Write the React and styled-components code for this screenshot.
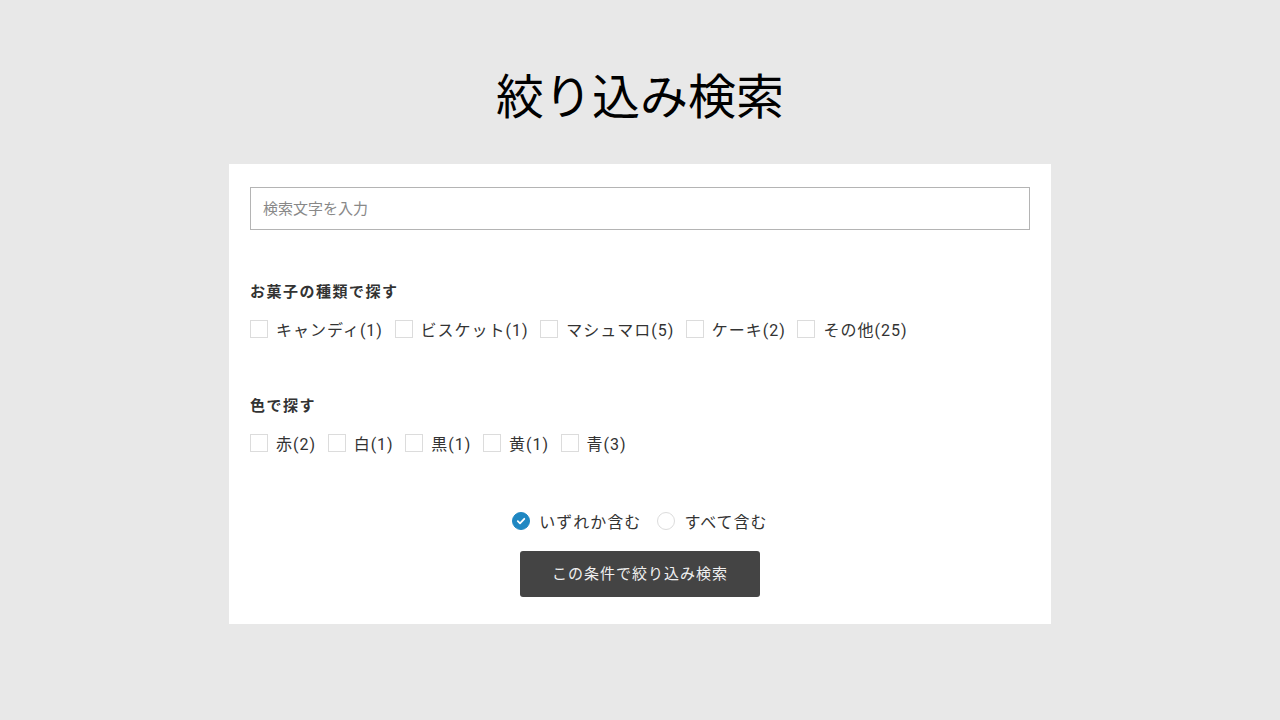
import React from 'react';
import styled, { createGlobalStyle } from 'styled-components';

const GlobalStyle = createGlobalStyle`
  html, body {
    margin: 0;
    padding: 0;
    background: #e8e8e8;
  }
  body {
    font-family: Roboto, "Noto Sans CJK JP", sans-serif;
    color: #333;
  }
  * { box-sizing: border-box; }
`;

const Page = styled.div`
  min-height: 720px;
  display: flex;
  flex-direction: column;
  align-items: center;
  padding-top: 64px;
`;

const Title = styled.h1`
  margin: 0 0 32px;
  font-size: 48px;
  line-height: 68px;
  font-weight: 400;
  color: #000;
  letter-spacing: 0;
`;

const Card = styled.form`
  width: 822px;
  background: #fff;
  padding: 23px 21px 27px;
`;

const SearchInput = styled.input`
  display: block;
  width: 100%;
  height: 43px;
  border: 1px solid #b4b4b4;
  padding: 0 12px;
  font-family: Roboto, "Noto Sans CJK JP", sans-serif;
  font-size: 15px;
  color: #333;
  outline: none;
  &::placeholder { color: #888; }
`;

const Section = styled.section`
  margin-top: ${p => p.$top}px;
`;

const Heading = styled.h2`
  margin: 0 0 15px;
  font-size: 15px;
  line-height: 22px;
  font-weight: 700;
  letter-spacing: 1.5px;
  color: #333;
`;

const Row = styled.div`
  display: flex;
  align-items: center;
  gap: 11.6px;
  height: 22px;
`;

const Option = styled.label`
  display: flex;
  align-items: center;
  gap: 8px;
  font-size: 16px;
  letter-spacing: 1px;
  color: #333;
  cursor: pointer;
`;

const Box = styled.input.attrs({ type: 'checkbox' })`
  appearance: none;
  margin: 0;
  width: 18px;
  height: 18px;
  border: 1px solid #dcdcdc;
  background: #fff;
`;

const RadioRow = styled.div`
  display: flex;
  justify-content: center;
  gap: 16px;
  height: 22px;
  margin-top: 56px;
  & > label { gap: 9px; }
`;

const RadioDot = styled.span`
  width: 18px;
  height: 18px;
  border-radius: 50%;
  display: flex;
  align-items: center;
  justify-content: center;
  background: ${p => (p.$on ? '#1f87c2' : '#fff')};
  border: 1px solid ${p => (p.$on ? '#1f87c2' : '#dcdcdc')};
`;

const Submit = styled.button`
  display: block;
  margin: 19px auto 0;
  width: 240px;
  height: 46px;
  padding: 0 0 3px;
  border: none;
  border-radius: 3px;
  background: #444;
  color: #f0f0f0;
  font-family: Roboto, "Noto Sans CJK JP", sans-serif;
  font-size: 15px;
  letter-spacing: 1px;
`;

const kinds = ['キャンディ(1)', 'ビスケット(1)', 'マシュマロ(5)', 'ケーキ(2)', 'その他(25)'];
const colors = ['赤(2)', '白(1)', '黒(1)', '黄(1)', '青(3)'];

function Radio({ on, children }) {
  return (
    <Option>
      <RadioDot $on={on}>
        {on && (
          <svg width="10" height="10" viewBox="0 0 10 10">
            <path d="M1.8 5.2 L4 7.3 L8.3 2.8" fill="none" stroke="#fff" strokeWidth="1.8" strokeLinecap="round" strokeLinejoin="round" />
          </svg>
        )}
      </RadioDot>
      {children}
    </Option>
  );
}

export default function App() {
  return (
    <Page>
      <GlobalStyle />
      <Title>絞り込み検索</Title>
      <Card onSubmit={e => e.preventDefault()}>
        <SearchInput placeholder="検索文字を入力" />
        <Section $top={51}>
          <Heading>お菓子の種類で探す</Heading>
          <Row>
            {kinds.map(k => (
              <Option key={k}><Box />{k}</Option>
            ))}
          </Row>
        </Section>
        <Section $top={55}>
          <Heading>色で探す</Heading>
          <Row>
            {colors.map(c => (
              <Option key={c}><Box />{c}</Option>
            ))}
          </Row>
        </Section>
        <RadioRow>
          <Radio on>いずれか含む</Radio>
          <Radio>すべて含む</Radio>
        </RadioRow>
        <Submit type="submit">この条件で絞り込み検索</Submit>
      </Card>
    </Page>
  );
}
